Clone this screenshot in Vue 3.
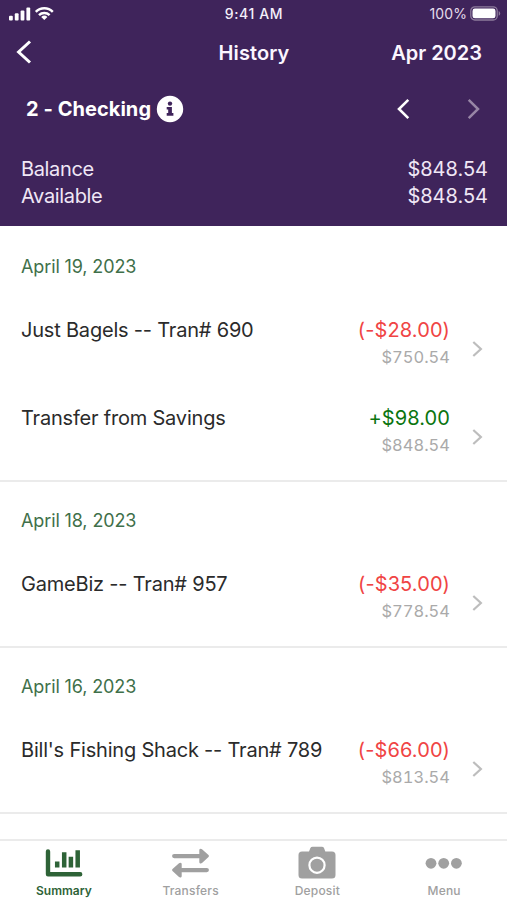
<script setup>
const sections = [
  {
    date: 'April 19, 2023',
    rows: [
      { title: 'Just Bagels -- Tran# 690', amount: '(-$28.00)', balance: '$750.54', credit: false },
      { title: 'Transfer from Savings', amount: '+$98.00', balance: '$848.54', credit: true },
    ],
  },
  {
    date: 'April 18, 2023',
    rows: [{ title: 'GameBiz -- Tran# 957', amount: '(-$35.00)', balance: '$778.54', credit: false }],
  },
  {
    date: 'April 16, 2023',
    rows: [{ title: "Bill's Fishing Shack -- Tran# 789", amount: '(-$66.00)', balance: '$813.54', credit: false }],
  },
]
</script>

<template>
  <div class="screen">
    <header class="header">
      <div class="status">
        <svg class="signal" width="48" height="16" viewBox="0 0 48 16">
          <g fill="#fff">
            <rect x="0" y="9.7" width="3.8" height="4.8" rx="1" />
            <rect x="5.8" y="7.2" width="3.8" height="7.3" rx="1" />
            <rect x="11.6" y="4.500" width="3.8" height="10" rx="1" />
            <rect x="17.4" y="1.400" width="3.8" height="13.1" rx="1" />
          </g>
          <g fill="none" stroke="#fff" stroke-width="2.5">
            <path d="M26.8 5.8 A12 12 0 0 1 43.8 5.8" />
            <path d="M30 9.1 A7.7 7.7 0 0 1 40.6 9.1" />
          </g>
          <path d="M35.3 13.9 L32.2 11 A4.6 4.6 0 0 1 38.4 11 Z" fill="#fff" />
        </svg>
        <span class="time">9:41 AM</span>
        <span class="power">
          <span class="percent">100%</span>
          <svg width="31" height="15" viewBox="0 0 31 15">
            <rect x=".8" y=".8" width="26.4" height="13.2" rx="4" fill="none" stroke="#8d7b9c" stroke-width="1.3" />
            <rect x="2.5" y="2.5" width="23" height="9.8" rx="2.4" fill="#fff" />
            <path d="M28.7 5v4.8q1.5-.8 1.5-2.4t-1.5-2.4z" fill="#8d7b9c" />
          </svg>
        </span>
      </div>
      <nav class="nav">
        <svg width="20" height="26" viewBox="0 0 20 26"><path d="M15 2.500 3.6 13l11.4 10.5" fill="none" stroke="#fff" stroke-width="3" /></svg>
        <span class="heading">History</span>
        <span class="month">Apr 2023</span>
      </nav>
      <div class="account">
        <span class="account-name">2 - Checking</span>
        <svg class="info" width="28" height="28" viewBox="0 0 28 28">
          <circle cx="14" cy="14" r="13.2" fill="#fff" />
          <circle cx="14" cy="8.6" r="2.2" fill="#3f245b" />
          <path d="M10.7 11.9h5.2v6.2h1.5v2.7h-6.7v-2.7h1.5v-3.5h-1.5z" fill="#3f245b" />
        </svg>
        <svg class="prev" width="14" height="22" viewBox="0 0 14 22"><path d="M12.3 1.8 3 11l9.3 9.2" fill="none" stroke="#fff" stroke-width="2.6" /></svg>
        <svg class="next" width="14" height="22" viewBox="0 0 14 22"><path d="M1.7 1.8 11 11l-9.3 9.2" fill="none" stroke="#9886a6" stroke-width="2.5" /></svg>
      </div>
      <dl class="totals">
        <div><dt>Balance</dt><dd>$848.54</dd></div>
        <div><dt>Available</dt><dd>$848.54</dd></div>
      </dl>
    </header>

    <main class="list">
      <section v-for="s in sections" :key="s.date" class="day">
        <h2>{{ s.date }}</h2>
        <div v-for="r in s.rows" :key="r.title" class="row">
          <span class="title">{{ r.title }}</span>
          <div class="figures">
            <span class="amount" :class="{ credit: r.credit }">{{ r.amount }}</span>
            <span class="balance">{{ r.balance }}</span>
          </div>
          <svg class="more" width="12" height="18" viewBox="0 0 12 18"><path d="M1.3 2 8.9 9l-7.6 7" fill="none" stroke="#bdbdbd" stroke-width="2.2" /></svg>
        </div>
      </section>
    </main>

    <footer class="tabs">
      <div class="tab active">
        <svg width="40" height="36" viewBox="0 0 40 36">
          <path d="M4 5.5v22.8h32.2" fill="none" stroke="currentColor" stroke-width="4.4" stroke-linecap="round" stroke-linejoin="round" />
          <path d="M13.2 15.6v6M20.2 6.2v15.4M26.9 10.7v10.9M33.7 4.2v17.4" fill="none" stroke="currentColor" stroke-width="4.5" />
        </svg>
        <span>Summary</span>
      </div>
      <div class="tab">
        <svg width="40" height="36" viewBox="0 0 40 36">
          <g transform="translate(-.5 .6)">
            <path d="M3.7 9.5H29M36.3 23.5H11" stroke="currentColor" stroke-width="4.3" stroke-linecap="round" />
            <path d="M29.3 2.4q1.2-.7 2.2.3l6.5 5.7q1 1 0 2.1l-6.5 6q-1.2.9-2.2.1-.5-.5-.5-1.2V3.6q0-.8.5-1.2z" fill="currentColor" />
            <path d="M10.7 16.4q-1.2-.7-2.2.3L2 22.4q-1 1 0 2.1l6.5 6q1.2.9 2.2.1.5-.5.5-1.2V17.6q0-.8-.5-1.2z" fill="currentColor" />
          </g>
        </svg>
        <span>Transfers</span>
      </div>
      <div class="tab">
        <svg width="40" height="36" viewBox="0 0 40 36">
          <path d="M5 5.4h7L13.4 2q.6-1.3 2.2-1.3h9.2q1.6 0 2.2 1.3l1.3 3.4H35q3.5 0 3.5 3.5v20.2q0 3.5-3.5 3.5H5q-3.5 0-3.5-3.5V8.9Q1.5 5.4 5 5.4z" fill="currentColor" />
          <circle cx="20" cy="19.2" r="7.6" fill="none" stroke="#fff" stroke-width="2.2" />
        </svg>
        <span>Deposit</span>
      </div>
      <div class="tab">
        <svg width="40" height="36" viewBox="0 0 40 36" fill="currentColor">
          <circle cx="7" cy="17.3" r="5.4" /><circle cx="19.7" cy="17.3" r="5.4" /><circle cx="32.4" cy="17.3" r="5.4" />
        </svg>
        <span>Menu</span>
      </div>
    </footer>
  </div>
</template>

<style>
body { margin: 0; background: #fff; }
</style>

<style scoped>
.screen {
  display: flex;
  flex-direction: column;
  width: 507px;
  height: 900px;
  overflow: hidden;
  background: #fff;
  font-family: Inter, "Liberation Sans", sans-serif;
}
svg { display: block; flex: none; }
span, dt, dd { white-space: nowrap; }
.header { flex: none; height: 226px; background: #3f245b; color: #fff; }
.status {
  display: grid;
  grid-template-columns: 1fr auto 1fr;
  align-items: center;
  height: 27px;
  padding: 0 6px 0 9px;
  box-sizing: border-box;
}
.time { margin-left: -2px; font-size: 14px; font-weight: 500; letter-spacing: .6px; color: #f4effa; }
.power { display: flex; justify-content: flex-end; align-items: center; gap: 3px; }
.percent { font-size: 14px; letter-spacing: .1px; color: #e5dcec; }
.nav {
  display: grid;
  grid-template-columns: 1fr auto 1fr;
  align-items: center;
  height: 51px;
  padding: 0 25px 0 15px;
  font-size: 20px;
  font-weight: 600;
  color: #fbf6ff;
}
.nav svg { margin-top: -1px; }
.month { text-align: right; }
.heading { margin-left: 11px; letter-spacing: .1px; }
.account { display: flex; align-items: center; height: 62px; padding: 0 26px 0 26px; }
.account-name { font-size: 20px; font-weight: 700; letter-spacing: .05px; }
.info { margin-left: 5px; }
.prev { margin-left: auto; }
.next { margin-left: 57px; }
.totals { margin: 0; padding: 16px 19px 0 21px; font-size: 20px; line-height: 27px; color: #f0e7f6; }
.totals div { display: flex; justify-content: space-between; }
dt { letter-spacing: -.35px; }
dd { margin: 0; }
.list { flex: 1; padding-top: 2px; min-height: 0; overflow: hidden; }
.day { padding: 0 23px 0 21px; border-bottom: 2px solid #ebebeb; }
h2 { margin: 0; padding-top: 24px; height: 52px; font-size: 18px; font-weight: 400; line-height: 29px; letter-spacing: -.12px; color: #3f704a; }
.row { display: flex; height: 88px; }
.title { flex: 1; padding-top: 14px; font-size: 20px; line-height: 24px; letter-spacing: -.2px; color: #2b2b2b; }
.figures { display: flex; flex-direction: column; align-items: flex-end; padding-top: 14px; }
.amount { font-size: 20px; line-height: 24px; letter-spacing: .1px; color: #f04444; }
.credit { color: #0b750f; }
.balance { margin-top: 4px; font-size: 16.5px; line-height: 22px; font-variant-numeric: tabular-nums; color: #aaa; }
.more { margin: 36px 0 0 22px; }
.tabs {
  display: grid;
  grid-template-columns: repeat(4, 1fr);
  flex: none;
  height: 61px;
  box-sizing: border-box;
  border-top: 2px solid #ebebeb;
}
.tab { display: flex; flex-direction: column; align-items: center; padding: 5px 0 0 1px; color: #a0a0a0; font-size: 12px; font-weight: 500; letter-spacing: .2px; line-height: 18px; }
.active { color: #2e6337; font-weight: 600; letter-spacing: 0; }
</style>
